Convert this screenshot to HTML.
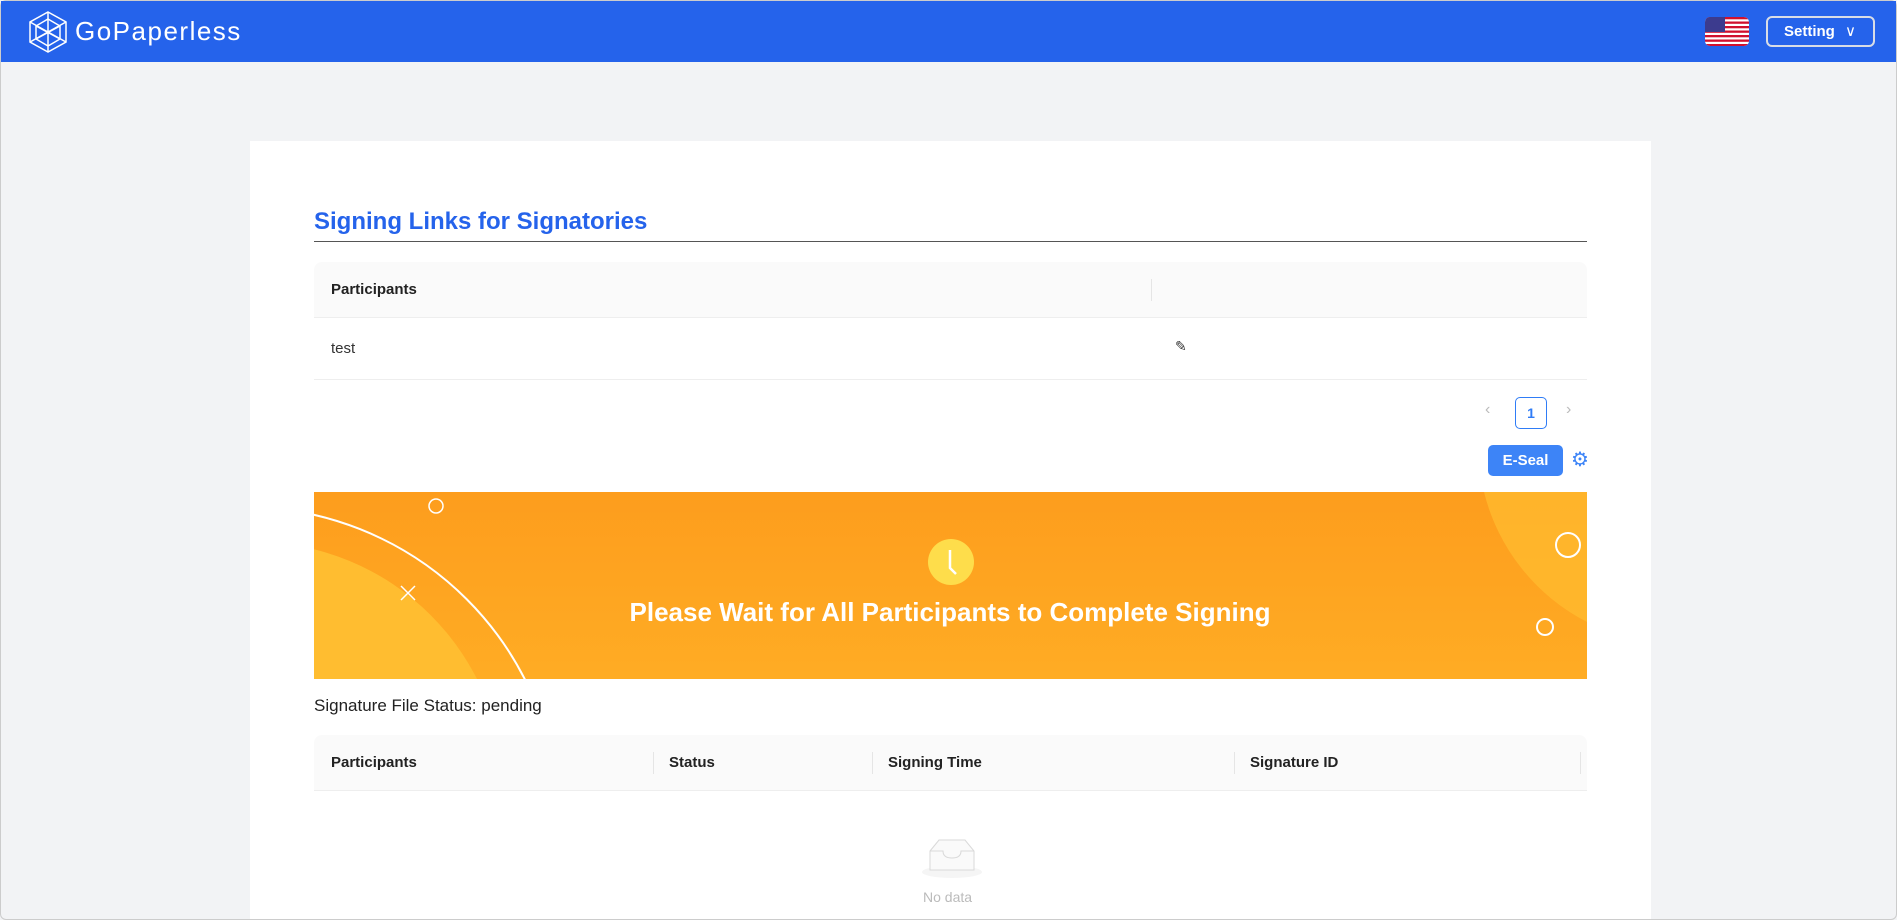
<!DOCTYPE html>
<html><head><meta charset="utf-8"><style>
*{box-sizing:border-box;margin:0;padding:0}
html,body{width:1897px;height:920px;overflow:hidden}
body{background:#f2f3f5;font-family:"Liberation Sans",sans-serif;position:relative;border:1px solid #ccc;border-radius:6px}
.hdr{position:absolute;left:0;top:0;width:1895px;height:61px;background:#2563eb}
.abs{position:absolute}
.card{position:absolute;left:249px;top:140px;width:1401px;height:778px;background:#fff}
.th{position:absolute;background:#fafafa;border-bottom:1px solid #eee;font-size:15px;font-weight:bold;color:#222}
.sep{position:absolute;width:1px;height:22px;background:#e5e5e5}
</style></head><body>
<div class="hdr">
 <svg class="abs" style="left:28px;top:10px" width="38" height="42" viewBox="0 0 38 42" fill="none" stroke="#fff" stroke-width="1.5"><polygon points="19,1 37,11 37,31 19,41 1,31 1,11"/><polygon points="19,8 31,15 31,28 19,35 7,28 7,15"/><path d="M19 1L19 41M1 11L37 31M37 11L1 31M7 15L31 28M31 15L7 28"/></svg>
 <div class="abs" style="left:74px;top:15px;color:#fff;font-size:26px;letter-spacing:1.5px">GoPaperless</div>
 <svg class="abs" style="left:1704px;top:16px" width="44" height="29" viewBox="0 0 44 29"><defs><clipPath id="c"><rect width="44" height="29" rx="5"/></clipPath></defs><g clip-path="url(#c)"><rect width="44" height="29" fill="#fff"/><g fill="#d0102e"><rect y="0" width="44" height="2.3"/><rect y="4.5" width="44" height="2.3"/><rect y="9" width="44" height="2.3"/><rect y="13.5" width="44" height="2.3"/><rect y="18" width="44" height="2.3"/><rect y="22.5" width="44" height="2.3"/><rect y="27" width="44" height="2.3"/></g><rect width="20" height="15" fill="#3c3b8e"/></g></svg>
 <div class="abs" style="left:1765px;top:15px;width:109px;height:31px;border:2px solid #d8dde6;border-radius:6px;color:#fff;font-weight:bold;font-size:15px;line-height:27px;padding-left:16px">Setting <span style="font-weight:normal;margin-left:6px">&#8744;</span></div>
</div>
<div class="card"></div>
<div class="abs" style="left:313px;top:207px;font-size:24px;font-weight:bold;color:#2563eb">Signing Links for Signatories</div>
<div class="abs" style="left:313px;top:240px;width:1273px;height:1px;background:#555"></div>
<div class="th" style="left:313px;top:261px;width:1273px;height:56px;border-radius:8px 8px 0 0"><span class="abs" style="left:17px;top:19px">Participants</span><div class="sep" style="left:837px;top:17px"></div></div>
<div class="abs" style="left:313px;top:317px;width:1273px;height:62px;border-bottom:1px solid #eee;font-size:15px;color:#333"><span class="abs" style="left:17px;top:22px">test</span><span class="abs" style="left:861px;top:20px;font-size:14px">&#9998;</span></div>
<div class="abs" style="left:1484px;top:400px;color:#bbb;font-size:16px">&#8249;</div>
<div class="abs" style="left:1514px;top:396px;width:32px;height:32px;border:1px solid #2f7cf6;border-radius:5px;color:#2f7cf6;text-align:center;line-height:30px;font-size:14px;font-weight:bold">1</div>
<div class="abs" style="left:1565px;top:400px;color:#bbb;font-size:16px">&#8250;</div>
<div class="abs" style="left:1487px;top:444px;width:75px;height:31px;background:#3d84f7;border-radius:5px;color:#fff;text-align:center;line-height:31px;font-size:15px;font-weight:bold">E-Seal</div>
<div class="abs" style="left:1570px;top:446px;color:#3d84f7;font-size:20px">&#9881;</div>
<svg class="abs" style="left:313px;top:491px" width="1273" height="187"><defs><linearGradient id="g" x1="0" y1="0" x2="0" y2="1"><stop offset="0" stop-color="#fd9d1d"/><stop offset="1" stop-color="#ffac24"/></linearGradient></defs><rect width="1273" height="187" fill="url(#g)"/><circle cx="-60" cy="300" r="250" fill="#ffbd30"/><path d="M1170 0 A200 200 0 0 0 1273 130 L1273 0Z" fill="#ffbd30" opacity=".7"/><circle cx="-70" cy="330" r="315" fill="none" stroke="#fff" stroke-width="2"/><circle cx="-70" cy="320" r="135" fill="none" stroke="#fff" stroke-width="2"/><circle cx="122" cy="14" r="7" fill="none" stroke="#fff" stroke-width="1.5"/><path d="M87 94L101 108M101 94L87 108" stroke="#fff" stroke-width="1.5"/><circle cx="1254" cy="53" r="12" fill="none" stroke="#fff" stroke-width="2"/><circle cx="1231" cy="135" r="8" fill="none" stroke="#fff" stroke-width="2"/><circle cx="637" cy="70" r="23" fill="#fedd4b"/><path d="M636 58V76L642 82" stroke="#fff" stroke-width="2.5" fill="none"/><text x="636" y="129" text-anchor="middle" fill="#fff" font-family="Liberation Sans" font-weight="bold" font-size="26">Please Wait for All Participants to Complete Signing</text></svg>
<div class="abs" style="left:313px;top:695px;font-size:17px;color:#222">Signature File Status: pending</div>
<div class="th" style="left:313px;top:734px;width:1273px;height:56px;border-radius:8px 8px 0 0">
 <span class="abs" style="left:17px;top:19px">Participants</span><div class="sep" style="left:339px;top:17px"></div>
 <span class="abs" style="left:355px;top:19px">Status</span><div class="sep" style="left:558px;top:17px"></div>
 <span class="abs" style="left:574px;top:19px">Signing Time</span><div class="sep" style="left:920px;top:17px"></div>
 <span class="abs" style="left:936px;top:19px">Signature ID</span><div class="sep" style="left:1266px;top:17px"></div>
</div>
<svg class="abs" style="left:920px;top:836px" width="62" height="42" viewBox="0 0 62 42"><ellipse cx="31" cy="35" rx="30" ry="6" fill="#f5f5f5"/><path d="M9 14L18 3H44L53 14V33H9Z" fill="#fafafa" stroke="#d9d9d9"/><path d="M9 14H22Q22 21 31 21Q40 21 40 14H53" fill="none" stroke="#d9d9d9"/></svg>
<div class="abs" style="left:922px;top:888px;font-size:14px;color:#bbb">No data</div>
</body></html>
